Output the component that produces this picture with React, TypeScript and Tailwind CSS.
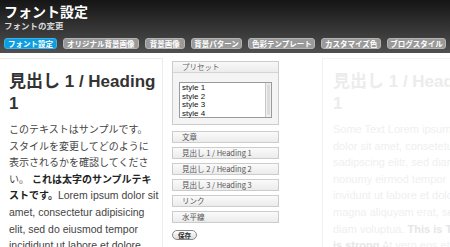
import React from "react";

const jp = { fontFamily: '"Noto Sans CJK JP", "Liberation Sans", sans-serif' };
const body = { fontFamily: '"Liberation Sans", "Noto Sans CJK JP", sans-serif' };

const navItems = [
  { label: "フォント設定", w: "w-[53px]", active: true },
  { label: "オリジナル背景画像", w: "w-[76px]" },
  { label: "背景画像", w: "w-[40px]" },
  { label: "背景パターン", w: "w-[52px]" },
  { label: "色彩テンプレート", w: "w-[67px]" },
  { label: "カスタマイズ色", w: "w-[60px]" },
  { label: "ブログスタイル", w: "w-[59px]" },
];

const sideButtons = [
  "文章",
  "見出し 1 / Heading 1",
  "見出し 2 / Heading 2",
  "見出し 3 / Heading 3",
  "リンク",
  "水平線",
];

function J({ children, bold }: { children: React.ReactNode; bold?: boolean }) {
  return (
    <span className={`text-[10px] ${bold ? "font-bold text-[#222]" : ""}`} style={jp}>
      {children}
    </span>
  );
}

export default function App() {
  return (
    <div className="w-[450px] h-[247px] overflow-hidden bg-white" style={body}>
      {/* header */}
      <div className="h-[53px] bg-gradient-to-b from-[#151515] via-[#333333] to-[#505050] px-[4px] pt-[2px]">
        <div className="text-[14px] font-bold leading-[18px] text-white" style={jp}>
          フォント設定
        </div>
        <div className="text-[8.5px] font-bold leading-[11px] text-[#d8d8d8]" style={jp}>
          フォントの変更
        </div>
        <div className="mt-[7px] flex gap-[6px]">
          {navItems.map((n) => (
            <div
              key={n.label}
              className={`${n.w} h-[11px] rounded-[3px] flex items-center justify-center text-[7.5px] font-bold text-white leading-none border ${
                n.active ? "bg-[#0c9ee0] border-[#3bb3ea]" : "bg-[#9a9a9a] border-[#b4b4b4]"
              }`}
              style={jp}
            >
              {n.label}
            </div>
          ))}
        </div>
      </div>

      <div className="flex pt-[5px]">
        {/* left panel */}
        <div className="w-[163px] h-[200px] shrink-0 border-t border-r border-[#ececec] pl-[9px] pt-[10px] text-[#333]">
          <div className="text-[17px] font-bold leading-[22px] text-[#333]">
            <span style={jp}>見出し</span> 1 / Heading
            <br />1
          </div>
          <div className="mt-[6px] whitespace-nowrap text-[10.5px] leading-[16.6px] text-[#444]">
            <div>
              <J>このテキストはサンプルです。</J>
            </div>
            <div>
              <J>スタイルを変更してどのように</J>
            </div>
            <div>
              <J>表示されるかを確認してくださ</J>
            </div>
            <div>
              <J>い。</J> <J bold>これは太字のサンプルテキ</J>
            </div>
            <div>
              <J bold>
                ストです<span className="mr-[-3px]">。</span>
              </J>{" "}
              Lorem ipsum dolor sit
            </div>
            <div>amet, consectetur adipisicing</div>
            <div>elit, sed do eiusmod tempor</div>
            <div>incididunt ut labore et dolore</div>
            <div>magna aliqua.</div>
          </div>
        </div>

        {/* middle column */}
        <div className="ml-[9px] w-[107px] shrink-0 pt-[3px]" style={jp}>
          <div className="border border-[#cccccc] bg-[#f4f4f4]">
            <div className="h-[11px] border-b border-[#d4d4d4] bg-gradient-to-b from-[#f8f8f8] to-[#ececec] pl-[9px] text-[7.5px] leading-[10px] text-[#666]">
              プリセット
            </div>
            <div className="px-[6px] pt-[9px] pb-[6px]">
              <div className="relative h-[36px] border border-[#9a9a9a] bg-white pl-[2px] pt-[1px]">
                {["style 1", "style 2", "style 3", "style 4"].map((s) => (
                  <div key={s} className="text-[8px] leading-[8.5px] text-[#111]" style={body}>
                    {s}
                  </div>
                ))}
                <div className="absolute right-0 top-0 bottom-0 w-[6px] border-l border-[#c8c8c8] bg-[#f0f0f0]">
                  <div className="mx-auto mt-[1px] h-[31px] w-[3px] rounded-full bg-[#dcdcdc]" />
                </div>
              </div>
            </div>
          </div>

          <div className="mt-[6px] flex flex-col gap-[4px]">
            {sideButtons.map((b) => (
              <div
                key={b}
                className="h-[12px] border border-[#cccccc] bg-gradient-to-b from-[#fafafa] to-[#ebebeb] pl-[9px] text-[7.5px] leading-[10px] text-[#555]"
              >
                {b}
              </div>
            ))}
          </div>

          <div className="mt-[7px] flex h-[10px] w-[25px] items-center justify-center rounded-full border border-[#888] bg-gradient-to-b from-[#ffffff] to-[#dcdcdc] text-[6.5px] font-bold leading-none text-[#333]">
            保存
          </div>
        </div>

        {/* right preview panel (faded) */}
        <div className="ml-[43px] w-[163px] h-[200px] shrink-0 border-t border-l border-[#f2f2f2] pl-[10px] pt-[10px]">
          <div className="whitespace-nowrap text-[17px] font-bold leading-[22px] text-[#ececec]">
            <span style={jp}>見出し</span> 1 / Heading
            <br />1
          </div>
          <div className="mt-[6px] whitespace-nowrap text-[11px] leading-[16.6px] text-[#efefef]">
            <div>Some Text Lorem ipsum</div>
            <div>dolor sit amet, consetetur</div>
            <div>sadipscing elitr, sed diam</div>
            <div>nonumy eirmod tempor</div>
            <div>invidunt ut labore et dolore</div>
            <div>magna aliquyam erat, sed</div>
            <div>
              diam voluptua. <strong className="text-[#e6e6e6]">This is Text</strong>
            </div>
            <div>
              <strong className="text-[#e6e6e6]">is strong</strong> At vero eos et
            </div>
            <div>accusam et justo duo</div>
          </div>
        </div>
      </div>
    </div>
  );
}
